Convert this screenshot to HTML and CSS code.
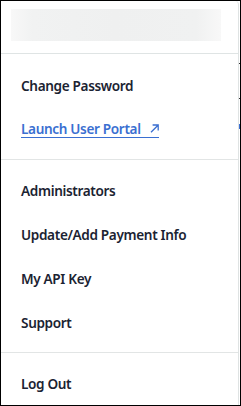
FILE: index.html
```html
<!DOCTYPE html>
<html>
<head>
<meta charset="utf-8">
<link rel="stylesheet" href="styles.css">
</head>
<body>
<div class="frame">
  <div class="menu">
    <div class="header"><div class="placeholder"></div></div>
    <div class="section">
      <div class="item">Change Password</div>
      <div class="item"><span class="link">Launch User Portal<svg class="ext" width="9" height="9" viewBox="0 0 9 9"><path d="M1 8.2 L8 1.2 M2.6 1 H8.2 V6.6" fill="none" stroke="#3a6fd1" stroke-width="1.3"/></svg></span></div>
    </div>
    <div class="section">
      <div class="item">Administrators</div>
      <div class="item">Update/Add Payment Info</div>
      <div class="item">My API Key</div>
      <div class="item">Support</div>
    </div>
    <div class="section last">
      <div class="item">Log Out</div>
    </div>
  </div>
  <div class="behind">
    <span class="mark m1"></span>
    <span class="mark m2"></span>
    <span class="mark m3"></span>
  </div>
</div>
</body>
</html>
```
FILE: styles.css
```css
html, body {
  margin: 0;
  padding: 0;
  background: #fff;
}
.frame {
  width: 241px;
  height: 406px;
  box-sizing: border-box;
  border: 1px solid #000;
  display: flex;
  overflow: hidden;
}
.menu {
  width: 237px;
  flex: none;
  border-right: 1px solid #dfe3e3;
  border-top-right-radius: 4px;
  background: #fff;
  font-family: "Segoe UI", "Noto Sans", sans-serif;
  font-size: 13.6px;
  font-weight: 600;
  letter-spacing: -0.35px;
  color: #1b2332;
}
.header {
  border-bottom: 1px solid #dfe4e4;
  padding: 8px 0 0 10px;
  box-sizing: border-box;
  height: 53px;
}
.placeholder {
  width: 210px;
  height: 32px;
  background: linear-gradient(90deg, #f8f8f8 0, #f1f2f2 10%, #eff0f0 50%, #f0f1f1 88%, #f8f8f8 100%);
}
.section {
  padding: 9px 0 8px;
  border-bottom: 1px solid #e2e5e5;
}
.section + .section {
  padding-top: 8px;
}
.section.last {
  border-bottom: none;
}
.item {
  height: 44px;
  display: flex;
  align-items: center;
  padding-left: 20px;
  line-height: 17px;
}
.link {
  display: inline-flex;
  align-items: center;
  color: #3a6fd1;
  border-bottom: 1px solid #3a6fd1;
  line-height: 17px;
}
.ext {
  margin-left: 9px;
  margin-top: -1px;
}
.behind {
  flex: 1;
  display: flex;
  flex-direction: column;
  align-items: flex-end;
}
.mark {
  width: 1px;
  display: block;
}
.m1 { margin-top: 62px; height: 1px; background: #333; }
.m2 { margin-top: 34px; height: 1px; background: #333; }
.m3 { margin-top: 25px; height: 5px; background: #3a6fd1; }
```
